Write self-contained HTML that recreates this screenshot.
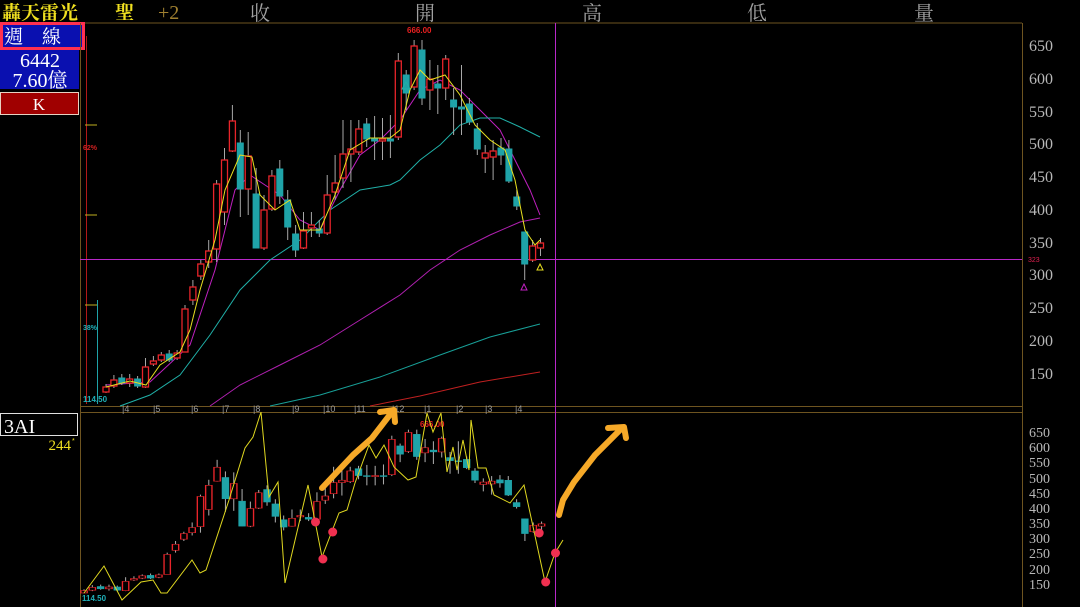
<!DOCTYPE html>
<html><head><meta charset="utf-8"><style>
html,body{margin:0;padding:0;background:#000;width:1080px;height:607px;overflow:hidden}
svg{position:absolute;left:0;top:0;font-family:"Liberation Sans","Noto Sans CJK TC",sans-serif}
.w{stroke:#a8a8a8;stroke-width:1}
.r{fill:#000;stroke:#e8242a;stroke-width:1.3}
.t{fill:#1fa3a8;stroke:#1fa3a8;stroke-width:1}
.ax text{fill:#b8b8b8;font-family:"Liberation Serif",serif;font-size:16px}
.ax2 text{fill:#b8b8b8;font-family:"Liberation Serif",serif;font-size:14px}
.mo text{fill:#9a9a9a;font-size:9px;font-family:"Liberation Sans",sans-serif}
.cj{font-family:"Noto Serif CJK TC","Noto Serif CJK SC",serif}
.se{font-family:"Liberation Serif","Noto Serif CJK TC",serif}
</style></head><body>
<svg width="1080" height="607" viewBox="0 0 1080 607" xmlns="http://www.w3.org/2000/svg" xmlns:xlink="http://www.w3.org/1999/xlink">
<!-- header -->
<text class="cj" x="2" y="19" fill="#f0e020" font-size="19" font-weight="bold">轟天雷光</text>
<text class="cj" x="115" y="19" fill="#f0e020" font-size="19" font-weight="bold">聖</text>
<text class="se" x="158" y="19" fill="#a08030" font-size="20">+2</text>
<text class="cj" x="250" y="20" fill="#a0a0a0" font-size="20">收</text>
<text class="cj" x="415" y="20" fill="#a0a0a0" font-size="20">開</text>
<text class="cj" x="582" y="20" fill="#a0a0a0" font-size="20">高</text>
<text class="cj" x="747" y="20" fill="#a0a0a0" font-size="20">低</text>
<text class="cj" x="914" y="20" fill="#a0a0a0" font-size="20">量</text>
<line x1="80" y1="23" x2="1022" y2="23" stroke="#6e5420"/>
<!-- left info -->
<rect x="0" y="47" width="79" height="42" fill="#0a10b0"/>
<rect x="1.5" y="23.5" width="82" height="25" fill="#0a10b0" stroke="#ff3050" stroke-width="3"/>
<text class="cj" x="4" y="43" fill="#fff" font-size="19">週　線</text>
<text class="se" x="40" y="67" fill="#fff" font-size="20" text-anchor="middle">6442</text>
<text class="se" x="40" y="87" fill="#fff" font-size="20" text-anchor="middle">7.60億</text>
<rect x="0.5" y="92.5" width="78" height="22" fill="#a00000" stroke="#e8d0c0"/>
<text class="se" x="39" y="110" fill="#fff" font-size="17" text-anchor="middle">K</text>
<rect x="0.5" y="413.5" width="77" height="22" fill="#000" stroke="#e0e0e0"/>
<text class="se" x="4" y="433" fill="#fff" font-size="20">3AI</text>
<text class="se" x="71" y="450" fill="#f0e020" font-size="15" text-anchor="end">244</text>
<text x="72" y="443" fill="#f0e020" font-size="7">*</text>
<!-- frame -->
<line x1="80.5" y1="23" x2="80.5" y2="607" stroke="#6e5420"/>
<line x1="1022.5" y1="23" x2="1022.5" y2="607" stroke="#6e5420"/>
<line x1="80" y1="406.5" x2="1022" y2="406.5" stroke="#6e5420"/>
<line x1="80" y1="412.5" x2="1022" y2="412.5" stroke="#6e5420"/>
<!-- fib lines -->
<line x1="86.5" y1="36" x2="86.5" y2="404" stroke="#b01818"/>
<line x1="97.5" y1="300" x2="97.5" y2="404" stroke="#1fa3a8"/>
<line x1="85" y1="125" x2="97" y2="125" stroke="#c0b020"/>
<line x1="85" y1="215" x2="97" y2="215" stroke="#c0b020"/>
<line x1="85" y1="305" x2="97" y2="305" stroke="#c0b020"/>
<text x="83" y="150" fill="#d02020" font-size="7" font-weight="bold">62%</text>
<text x="83" y="330" fill="#1fb0b8" font-size="7" font-weight="bold">38%</text>
<text x="83" y="402" fill="#1fb0b8" font-size="8" font-weight="bold">114.50</text>
<text x="407" y="33" fill="#e82020" font-size="8" font-weight="bold">666.00</text>
<text x="420" y="427" fill="#e82020" font-size="8" font-weight="bold">666.00</text>
<text x="82" y="601" fill="#1fb0b8" font-size="8" font-weight="bold">114.50</text>
<!-- month labels -->
<g class="mo">
<text x="122" y="412">|4</text><text x="153" y="412">|5</text><text x="191" y="412">|6</text><text x="222" y="412">|7</text><text x="253" y="412">|8</text><text x="292" y="412">|9</text><text x="323" y="412">|10</text><text x="354" y="412">|11</text><text x="392" y="412">|12</text><text x="424" y="412">|1</text><text x="456" y="412">|2</text><text x="485" y="412">|3</text><text x="515" y="412">|4</text>
</g>
<!-- axis -->
<g class="ax">
<text x="1029" y="51">650</text><text x="1029" y="84">600</text><text x="1029" y="117">550</text><text x="1029" y="149">500</text><text x="1029" y="182">450</text><text x="1029" y="215">400</text><text x="1029" y="248">350</text><text x="1029" y="280">300</text><text x="1029" y="313">250</text><text x="1029" y="346">200</text><text x="1029" y="379">150</text>
</g>
<g class="ax2">
<text x="1029" y="437">650</text><text x="1029" y="452">600</text><text x="1029" y="467">550</text><text x="1029" y="483">500</text><text x="1029" y="498">450</text><text x="1029" y="513">400</text><text x="1029" y="528">350</text><text x="1029" y="543">300</text><text x="1029" y="558">250</text><text x="1029" y="574">200</text><text x="1029" y="589">150</text>
</g>
<!-- crosshair -->
<line x1="555.5" y1="23" x2="555.5" y2="607" stroke="#b828c8"/>
<line x1="80" y1="259.5" x2="1022" y2="259.5" stroke="#b828c8"/>
<text x="1028" y="262" fill="#e02050" font-size="7">323</text>
<!-- MAs -->
<g fill="none" stroke-width="1">
<polyline stroke="#c020c0" points="106,385 150,382 190,345 215,270 235,190 250,175 265,185 280,195 300,220 320,230 340,190 360,155 380,140 400,120 420,90 440,80 460,90 480,110 500,130 515,160 530,190 540,215"/>
<polyline stroke="#20b0a8" points="120,406 150,395 180,375 210,335 240,290 270,260 300,240 330,210 360,190 390,185 400,180 420,160 440,145 460,125 480,118 500,118 520,127 540,137"/>
<polyline stroke="#b020b0" points="210,406 240,385 280,365 320,345 360,320 400,295 430,270 460,250 490,235 520,222 540,218"/>
<polyline stroke="#18a098" points="270,406 320,395 380,377 440,355 490,337 540,324"/>
<polyline stroke="#c02020" points="370,406 420,396 480,382 540,372"/>
</g>
<g id="cs">
<line class="w" x1="106" y1="384" x2="106" y2="393"/><rect class="r" x="103" y="387" width="6" height="5"/>
<line class="w" x1="113.9" y1="375" x2="113.9" y2="388"/><rect class="r" x="110.9" y="380" width="6" height="6"/>
<line class="w" x1="121.8" y1="374" x2="121.8" y2="385"/><rect class="t" x="118.8" y="378" width="6" height="5"/>
<line class="w" x1="129.7" y1="374" x2="129.7" y2="387"/><rect class="r" x="126.7" y="379" width="6" height="4"/>
<line class="w" x1="137.6" y1="376" x2="137.6" y2="388"/><rect class="t" x="134.6" y="379" width="6" height="7"/>
<line class="w" x1="145.5" y1="358" x2="145.5" y2="388"/><rect class="r" x="142.5" y="367" width="6" height="20"/>
<line class="w" x1="153.4" y1="356" x2="153.4" y2="366"/><rect class="r" x="150.4" y="361" width="6" height="3"/>
<line class="w" x1="161.3" y1="352" x2="161.3" y2="362"/><rect class="r" x="158.3" y="355" width="6" height="5"/>
<line class="w" x1="169.2" y1="350" x2="169.2" y2="362"/><rect class="t" x="166.2" y="354" width="6" height="6"/>
<line class="w" x1="177.1" y1="350" x2="177.1" y2="360"/><rect class="r" x="174.1" y="353" width="6" height="5"/>
<line class="w" x1="185" y1="305" x2="185" y2="352"/><rect class="r" x="182" y="309" width="6" height="43"/>
<line class="w" x1="192.9" y1="280" x2="192.9" y2="305"/><rect class="r" x="189.9" y="287" width="6" height="13"/>
<line class="w" x1="200.8" y1="260" x2="200.8" y2="280"/><rect class="r" x="197.8" y="264" width="6" height="12"/>
<line class="w" x1="208.7" y1="240" x2="208.7" y2="268"/><rect class="r" x="205.7" y="251" width="6" height="11"/>
<line class="w" x1="216.6" y1="180" x2="216.6" y2="262"/><rect class="r" x="213.6" y="184" width="6" height="65"/>
<line class="w" x1="224.5" y1="148" x2="224.5" y2="225"/><rect class="r" x="221.5" y="160" width="6" height="52"/>
<line class="w" x1="232.4" y1="105" x2="232.4" y2="152"/><rect class="r" x="229.4" y="121" width="6" height="30"/>
<line class="w" x1="240.3" y1="130" x2="240.3" y2="217"/><rect class="t" x="237.3" y="143" width="6" height="46"/>
<line class="w" x1="248.2" y1="132" x2="248.2" y2="215"/><rect class="r" x="245.2" y="156" width="6" height="33"/>
<line class="w" x1="256.1" y1="168" x2="256.1" y2="248"/><rect class="t" x="253.1" y="194" width="6" height="54"/>
<line class="w" x1="264" y1="195" x2="264" y2="250"/><rect class="r" x="261" y="210" width="6" height="38"/>
<line class="w" x1="271.9" y1="170" x2="271.9" y2="211"/><rect class="r" x="268.9" y="176" width="6" height="33"/>
<line class="w" x1="279.8" y1="160" x2="279.8" y2="204"/><rect class="t" x="276.8" y="169" width="6" height="27"/>
<line class="w" x1="287.7" y1="190" x2="287.7" y2="240"/><rect class="t" x="284.7" y="200" width="6" height="27"/>
<line class="w" x1="295.6" y1="225" x2="295.6" y2="257"/><rect class="t" x="292.6" y="234" width="6" height="16"/>
<line class="w" x1="303.5" y1="212" x2="303.5" y2="249"/><rect class="r" x="300.5" y="231" width="6" height="17"/>
<line class="w" x1="311.4" y1="212" x2="311.4" y2="237"/><rect class="r" x="308.4" y="225" width="6" height="3"/>
<line class="w" x1="319.3" y1="220" x2="319.3" y2="237"/><rect class="t" x="316.3" y="229" width="6" height="4"/>
<line class="w" x1="327.2" y1="175" x2="327.2" y2="235"/><rect class="r" x="324.2" y="195" width="6" height="38"/>
<line class="w" x1="335.1" y1="155" x2="335.1" y2="200"/><rect class="r" x="332.1" y="183" width="6" height="9"/>
<line class="w" x1="343" y1="120" x2="343" y2="188"/><rect class="r" x="340" y="154" width="6" height="24"/>
<line class="w" x1="350.9" y1="120" x2="350.9" y2="182"/><rect class="r" x="347.9" y="149" width="6" height="5"/>
<line class="w" x1="358.8" y1="120" x2="358.8" y2="155"/><rect class="r" x="355.8" y="129" width="6" height="23"/>
<line class="w" x1="366.7" y1="118" x2="366.7" y2="147"/><rect class="t" x="363.7" y="124" width="6" height="15"/>
<line class="w" x1="374.6" y1="116" x2="374.6" y2="160"/><rect class="t" x="371.6" y="139" width="6" height="2"/>
<line class="w" x1="382.5" y1="118" x2="382.5" y2="160"/><rect class="r" x="379.5" y="139" width="6" height="2"/>
<line class="w" x1="390.4" y1="115" x2="390.4" y2="158"/><rect class="t" x="387.4" y="139" width="6" height="2"/>
<line class="w" x1="398.3" y1="53" x2="398.3" y2="140"/><rect class="r" x="395.3" y="61" width="6" height="76"/>
<line class="w" x1="406.2" y1="70" x2="406.2" y2="110"/><rect class="t" x="403.2" y="75" width="6" height="18"/>
<line class="w" x1="414.1" y1="40" x2="414.1" y2="90"/><rect class="r" x="411.1" y="46" width="6" height="41"/>
<line class="w" x1="422" y1="40" x2="422" y2="105"/><rect class="t" x="419" y="50" width="6" height="48"/>
<line class="w" x1="429.9" y1="60" x2="429.9" y2="110"/><rect class="r" x="426.9" y="79" width="6" height="11"/>
<line class="w" x1="437.8" y1="65" x2="437.8" y2="114"/><rect class="t" x="434.8" y="84" width="6" height="4"/>
<line class="w" x1="445.7" y1="55" x2="445.7" y2="100"/><rect class="r" x="442.7" y="59" width="6" height="29"/>
<line class="w" x1="453.6" y1="88" x2="453.6" y2="135"/><rect class="t" x="450.6" y="100" width="6" height="7"/>
<line class="w" x1="461.5" y1="65" x2="461.5" y2="135"/><rect class="t" x="458.5" y="107" width="6" height="2"/>
<line class="w" x1="469.4" y1="98" x2="469.4" y2="125"/><rect class="t" x="466.4" y="104" width="6" height="18"/>
<line class="w" x1="477.3" y1="123" x2="477.3" y2="155"/><rect class="t" x="474.3" y="129" width="6" height="20"/>
<line class="w" x1="485.2" y1="145" x2="485.2" y2="173"/><rect class="r" x="482.2" y="153" width="6" height="5"/>
<line class="w" x1="493.1" y1="140" x2="493.1" y2="180"/><rect class="r" x="490.1" y="151" width="6" height="6"/>
<line class="w" x1="501" y1="138" x2="501" y2="165"/><rect class="t" x="498" y="148" width="6" height="7"/>
<line class="w" x1="508.9" y1="140" x2="508.9" y2="183"/><rect class="t" x="505.9" y="149" width="6" height="32"/>
<line class="w" x1="516.8" y1="190" x2="516.8" y2="210"/><rect class="t" x="513.8" y="197" width="6" height="9"/>
<line class="w" x1="524.7" y1="232" x2="524.7" y2="280"/><rect class="t" x="521.7" y="232" width="6" height="32"/>
<line class="w" x1="532.6" y1="240" x2="532.6" y2="262"/><rect class="r" x="529.6" y="246" width="6" height="14"/>
<line class="w" x1="540.5" y1="238" x2="540.5" y2="256"/><rect class="r" x="537.5" y="243" width="6" height="5"/>
</g>
<polyline fill="none" stroke="#e8e020" stroke-width="1" points="106,387 130,381 146,385 160,365 180,352 190,330 200,290 215,240 225,190 240,155 252,157 260,195 275,210 290,200 300,230 320,230 335,195 350,150 370,138 390,138 400,130 410,90 420,70 430,80 445,75 460,95 475,125 490,140 505,150 515,180 525,230 535,245 540,240"/>
<g fill="none" stroke-width="1">
<path d="M406 82 l-4 7 h8z" stroke="#20b0a8"/>
<path d="M524 284 l-3 6 h6z" stroke="#c020c0"/>
<path d="M540 264 l-3 6 h6z" stroke="#e8e020"/>
</g>
<!-- lower panel -->
<use xlink:href="#cs" href="#cs" transform="matrix(1.053 0 0 0.464 -27.6 411.1)"/>
<polyline fill="none" stroke="#e0d820" stroke-width="1" points="84,593 104,566 122,600 141,582 153,580 161,593 167,593 192,560 200,573 206,570 229,500 245,448 253,437 261,412 269,497 278,482 285,583 308,485 322,557 339,513 347,510 355,483 369,445 376,458 384,445 394,467 408,480 416,477 427,413 433,432 441,413 447,472 453,447 457,470 463,440 469,470 471,420 478,468 486,468 494,495 510,503 524,485 545,582 555,553 563,540"/>
<g fill="#f03050">
<circle cx="315.5" cy="522" r="4.5"/><circle cx="332.7" cy="532" r="4.5"/><circle cx="322.9" cy="559" r="4.5"/>
<circle cx="539.2" cy="533" r="4.5"/><circle cx="545.7" cy="582" r="4.5"/><circle cx="555.5" cy="553" r="4.5"/>
</g>
<!-- arrows -->
<g fill="none" stroke="#f6a928" stroke-width="6" stroke-linecap="round" stroke-linejoin="round">
<path d="M322 488 L353 455 L372 438 L392 412"/>
<path d="M380 412 L394 410 L395 422"/>
<path d="M559 515 L563 500 L574 482 L595 455 L622 428"/>
<path d="M608 428 L624 427 L626 438"/>
</g>
</svg>
</body></html>
